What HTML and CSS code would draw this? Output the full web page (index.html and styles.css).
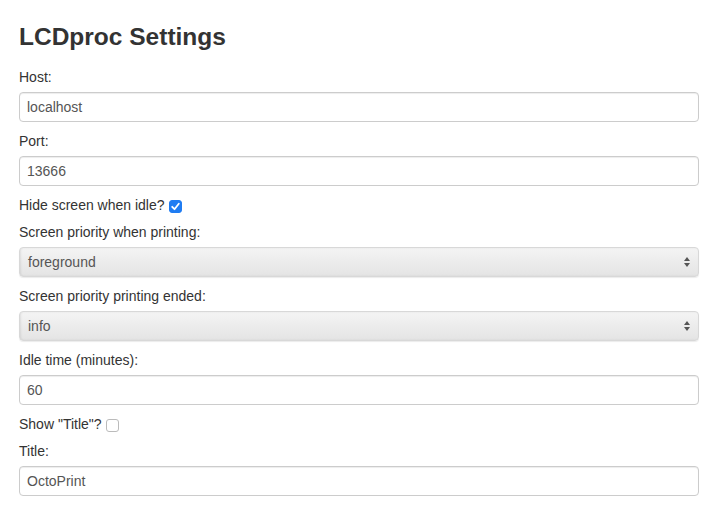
FILE: index.html
```html
<!DOCTYPE html>
<html>
<head>
<meta charset="utf-8">
<link rel="stylesheet" href="styles.css">
</head>
<body>
<div class="page">
  <h3 class="title">LCDproc Settings</h3>
  <form class="form">
    <label class="lbl">Host:</label>
    <input class="field" type="text" value="localhost">
    <label class="lbl">Port:</label>
    <input class="field" type="text" value="13666">
    <label class="lbl lbl-cb">Hide screen when idle? <span class="cb cb-on"><svg viewBox="0 0 13 13" width="13" height="13"><path d="M3.2 6.8 L5.5 9.2 L9.8 3.8" fill="none" stroke="#fff" stroke-width="1.8" stroke-linecap="round" stroke-linejoin="round"/></svg></span></label>
    <label class="lbl">Screen priority when printing:</label>
    <div class="sel"><span>foreground</span><svg class="arrows" viewBox="0 0 8 12" width="8" height="12"><path d="M4 1 L7 5 H1 Z M4 11 L7 7 H1 Z" fill="#555"/></svg></div>
    <label class="lbl">Screen priority printing ended:</label>
    <div class="sel"><span>info</span><svg class="arrows" viewBox="0 0 8 12" width="8" height="12"><path d="M4 1 L7 5 H1 Z M4 11 L7 7 H1 Z" fill="#555"/></svg></div>
    <label class="lbl">Idle time (minutes):</label>
    <input class="field" type="text" value="60">
    <label class="lbl lbl-cb">Show "Title"? <span class="cb"></span></label>
    <label class="lbl">Title:</label>
    <input class="field" type="text" value="OctoPrint">
  </form>
</div>
</body>
</html>
```
FILE: styles.css
```css
html, body {
  margin: 0;
  padding: 0;
  background: #fff;
}
body {
  font-family: "Liberation Sans", Arial, sans-serif;
  font-size: 14px;
  line-height: 20px;
  color: #333;
}
.page {
  padding: 7px 24px 0 19px;
}
.title {
  margin: 10px 0;
  font-size: 24.5px;
  line-height: 40px;
  font-weight: bold;
  color: #333;
}
.form {
  display: flex;
  flex-direction: column;
  width: 680px;
}
.lbl {
  display: flex;
  align-items: center;
  gap: 4px;
  height: 20px;
  margin-bottom: 5px;
}
.lbl-cb {
  margin-bottom: 7px;
}
.field {
  box-sizing: border-box;
  width: 680px;
  height: 30px;
  margin: 0 0 9px;
  padding: 4px 6px 4px 7px;
  border: 1px solid #ccc;
  border-radius: 4px;
  box-shadow: inset 0 1px 1px rgba(0,0,0,0.075);
  font-family: "Liberation Sans", Arial, sans-serif;
  font-size: 14px;
  color: #555;
  background: #fff;
}
.sel {
  box-sizing: border-box;
  width: 680px;
  height: 30px;
  margin-bottom: 9px;
  display: flex;
  align-items: center;
  justify-content: space-between;
  padding: 0 7px 0 8px;
  border-radius: 4px;
  border: 1px solid #d8d8d8;
  background: linear-gradient(#f4f4f4, #e4e4e4);
  box-shadow: inset 1px 0 2px rgba(0,0,0,0.08), 0 1px 1px rgba(0,0,0,0.08);
  color: #555;
}
.arrows {
  display: block;
}
.cb {
  box-sizing: border-box;
  display: inline-block;
  width: 13px;
  height: 13px;
  border: 1px solid #bbb;
  border-radius: 3px;
  background: #fff;
  margin-top: 3px;
}
.cb svg {
  display: block;
  margin: -1px;
}
.cb-on {
  background: #1f7cf2;
  border-color: #1f7cf2;
}
```
